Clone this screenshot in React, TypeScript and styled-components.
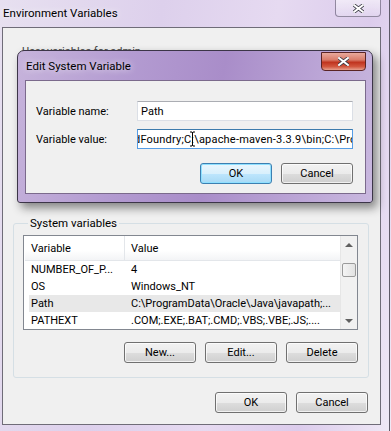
import React from "react";
import styled, { createGlobalStyle, css } from "styled-components";

const FONT = `"Roboto", "Liberation Sans", sans-serif`;

const Global = createGlobalStyle`
  html, body {
    margin: 0;
    padding: 0;
    background: #ffffff;
  }
  body {
    font-family: ${FONT};
    font-size: 11px;
    color: #000000;
  }
`;

const Screen = styled.div`
  position: relative;
  width: 391px;
  height: 431px;
  overflow: hidden;
  background: linear-gradient(
    100deg,
    #e7e0f0 0%,
    #ddd0ec 35%,
    #e6daf1 60%,
    #dcccec 80%,
    #efe9f6 100%
  );
`;

const OuterWindow = styled.div`
  display: flex;
  flex-direction: column;
  width: 389px;
  height: 431px;
  border-right: 1px solid #5e5a68;
`;

const TitleBar = styled.div`
  position: relative;
  height: 27px;
  display: flex;
  align-items: center;
  padding: 0 0 2px 3px;
  box-sizing: border-box;
  font-size: 11.5px;
  color: #000;
  text-shadow: 0 0 6px rgba(255, 255, 255, 0.9);
`;

const CloseButton = styled.div<{ $red?: boolean }>`
  position: absolute;
  display: flex;
  align-items: center;
  justify-content: center;
  box-sizing: border-box;
  border-radius: 0 0 4px 4px;
  ${(p) =>
    p.$red
      ? css`
          top: 1px;
          right: 0;
          width: 45px;
          height: 19px;
          border: 1px solid #5a2424;
          background: linear-gradient(
            #e8a99c 0%,
            #d97c6a 40%,
            #c0341f 55%,
            #d2573f 80%,
            #e6a08f 100%
          );
        `
      : css`
          top: 0;
          right: 8px;
          width: 46px;
          height: 17px;
          border: 1px solid rgba(70, 60, 90, 0.55);
          border-top: none;
          background: linear-gradient(
            rgba(255, 255, 255, 0.55),
            rgba(235, 228, 245, 0.35)
          );
        `}
`;

const Client = styled.div`
  position: relative;
  margin-left: 2px;
  width: 379px;
  height: 398px;
  border: 1px solid #6f6c78;
  background: #f0f0f0;
  display: flex;
  flex-direction: column;
  padding: 0 11px 0 10px;
  box-sizing: border-box;
`;

const UserLabel = styled.div`
  height: 188px;
  padding: 17px 0 0 9px;
  box-sizing: border-box;
  color: #444;
`;

const GroupBox = styled.fieldset`
  margin: 0;
  height: 162px;
  padding: 5px 10px 0 9px;
  border: 1px solid #d5dfe5;
  border-radius: 3px;
  box-sizing: border-box;
  display: flex;
  flex-direction: column;
  gap: 12px;
  legend {
    padding: 0 2px;
    margin-left: 5px;
    font-size: 11.5px;
  }
`;

const ListView = styled.div`
  display: flex;
  height: 95px;
  box-sizing: border-box;
  border: 1px solid #828790;
  background: #ffffff;
`;

const ListBody = styled.div`
  flex: 1;
  display: flex;
  flex-direction: column;
`;

const HeaderRow = styled.div`
  display: grid;
  grid-template-columns: 99px 1fr;
  height: 24px;
  background: linear-gradient(#ffffff 0%, #ffffff 60%, #f3f4f6 100%);
  border-bottom: 1px solid #e3e6ea;
  margin-left: 1px;
`;

const HeaderCell = styled.div`
  display: flex;
  align-items: center;
  padding-left: 6px;
  & + & {
    border-left: 1px solid #e3e6ea;
  }
`;

const Row = styled.div<{ $hl?: boolean }>`
  display: grid;
  grid-template-columns: 100px 1fr;
  height: 17px;
  align-items: center;
  margin-left: 5px;
  background: ${(p) => (p.$hl ? "#e8e8e8" : "transparent")};
  &:first-of-type {
    margin-top: 2px;
  }
`;

const Cell = styled.div`
  padding-left: 2px;
  white-space: nowrap;
  overflow: hidden;
`;

const ScrollBar = styled.div`
  width: 16px;
  display: flex;
  flex-direction: column;
  align-items: center;
  background: #f1f1f1;
  border-left: 1px solid #e6e6e6;
`;

const Arrow = styled.div<{ $down?: boolean }>`
  height: 17px;
  display: flex;
  align-items: center;
  justify-content: center;
  &::after {
    content: "";
    border-left: 4px solid transparent;
    border-right: 4px solid transparent;
    ${(p) =>
      p.$down
        ? "border-top: 4px solid #606060;"
        : "border-bottom: 4px solid #606060;"}
  }
`;

const Thumb = styled.div`
  margin-top: 10px;
  width: 14px;
  height: 14px;
  border: 1px solid #9a9a9a;
  border-radius: 2px;
  box-sizing: border-box;
  background: linear-gradient(90deg, #f4f4f4, #e2e2e2);
`;

const ScrollSpacer = styled.div`
  flex: 1;
`;

const ButtonRow = styled.div<{ $top?: number; $right?: number }>`
  display: flex;
  justify-content: flex-end;
  gap: 9px;
  margin-top: ${(p) => p.$top ?? 0}px;
  margin-right: ${(p) => p.$right ?? 0}px;
`;

const Button = styled.div<{ $default?: boolean }>`
  width: 72px;
  height: 21px;
  box-sizing: border-box;
  display: flex;
  align-items: center;
  justify-content: center;
  border-radius: 3px;
  border: 1px solid #707070;
  background: linear-gradient(#f2f2f2 0%, #ebebeb 50%, #dddddd 51%, #cfcfcf 100%);
  box-shadow: inset 0 0 0 1px rgba(255, 255, 255, 0.7);
  ${(p) =>
    p.$default &&
    css`
      border-color: #3c7fb1;
      background: linear-gradient(
        #eaf6fd 0%,
        #d9f0fc 50%,
        #bee6fd 51%,
        #a7d9f5 100%
      );
      box-shadow: inset 0 0 0 1px #8fe0ff;
    `}
`;

const EditDialog = styled.div`
  position: absolute;
  left: 14px;
  top: 22px;
  width: 356px;
  height: 153px;
  box-sizing: border-box;
  border: 1px solid #3c3548;
  border-radius: 7px 7px 3px 3px;
  background: linear-gradient(
    100deg,
    #c6b3db 0%,
    #b39bd1 30%,
    #a98dc9 55%,
    #bba5d6 80%,
    #c9b8df 100%
  );
  box-shadow: 4px 5px 10px rgba(0, 0, 0, 0.45);
  display: flex;
  flex-direction: column;
  padding: 0 6px 8px 7px;
`;

const DialogTitle = styled.div`
  position: relative;
  height: 29px;
  display: flex;
  align-items: center;
  padding-left: 1px;
  font-size: 11.5px;
  text-shadow: 0 0 7px rgba(255, 255, 255, 0.95);
`;

const DialogClient = styled.div`
  flex: 1;
  background: #f0f0f0;
  border: 1px solid #7b6a8c;
  padding: 20px 12px 0 10px;
  display: flex;
  flex-direction: column;
  gap: 8px;
`;

const Field = styled.div`
  display: flex;
  align-items: center;
`;

const FieldLabel = styled.div`
  width: 102px;
`;

const TextBox = styled.div<{ $focus?: boolean }>`
  position: relative;
  width: 218px;
  height: 20px;
  box-sizing: border-box;
  background: #ffffff;
  border: 1px solid ${(p) => (p.$focus ? "#569de5" : "#dbdfe6")};
  border-top-color: ${(p) => (p.$focus ? "#3d7bad" : "#abadb3")};
  display: flex;
  align-items: center;
  padding-left: 3px;
  overflow: hidden;
  white-space: nowrap;
`;

const Scrolled = styled.span`
  margin-left: -7px;
  letter-spacing: 0.2px;
`;

const IBeam = styled.svg`
  position: absolute;
  left: 51px;
  top: 1px;
`;

const XGlyph = () => (
  <svg width={11} height={9} viewBox="0 0 11 9">
    <path
      d="M1 1 L10 8 M10 1 L1 8"
      stroke="#3a3a44"
      strokeWidth="3.6"
      strokeLinecap="square"
    />
    <path
      d="M1 1 L10 8 M10 1 L1 8"
      stroke="#ffffff"
      strokeWidth="2"
      strokeLinecap="square"
    />
  </svg>
);

const rows = [
  { name: "NUMBER_OF_P...", value: "4" },
  { name: "OS", value: "Windows_NT" },
  { name: "Path", value: "C:\\ProgramData\\Oracle\\Java\\javapath;...", hl: true },
  { name: "PATHEXT", value: ".COM;.EXE;.BAT;.CMD;.VBS;.VBE;.JS;...." },
];

export default function App() {
  return (
    <>
      <Global />
      <Screen>
        <OuterWindow>
          <TitleBar>
            Environment Variables
            <CloseButton>
              <XGlyph />
            </CloseButton>
          </TitleBar>
          <Client>
            <UserLabel>User variables for admin</UserLabel>
            <GroupBox>
              <legend>System variables</legend>
              <ListView>
                <ListBody>
                  <HeaderRow>
                    <HeaderCell>Variable</HeaderCell>
                    <HeaderCell>Value</HeaderCell>
                  </HeaderRow>
                  {rows.map((r) => (
                    <Row key={r.name} $hl={r.hl}>
                      <Cell>{r.name}</Cell>
                      <Cell>{r.value}</Cell>
                    </Row>
                  ))}
                </ListBody>
                <ScrollBar>
                  <Arrow />
                  <Thumb />
                  <ScrollSpacer />
                  <Arrow $down />
                </ScrollBar>
              </ListView>
              <ButtonRow>
                <Button>New...</Button>
                <Button>Edit...</Button>
                <Button>Delete</Button>
              </ButtonRow>
            </GroupBox>
            <ButtonRow $top={14} $right={1}>
              <Button>OK</Button>
              <Button>Cancel</Button>
            </ButtonRow>

            <EditDialog>
              <DialogTitle>
                Edit System Variable
                <CloseButton $red>
                  <XGlyph />
                </CloseButton>
              </DialogTitle>
              <DialogClient>
                <Field>
                  <FieldLabel>Variable name:</FieldLabel>
                  <TextBox>Path</TextBox>
                </Field>
                <Field>
                  <FieldLabel>Variable value:</FieldLabel>
                  <TextBox $focus>
                    <Scrolled>
                      dFoundry;C:\apache-maven-3.3.9\bin;C:\Program Files
                    </Scrolled>
                    <IBeam width="7" height="16" viewBox="0 0 7 16">
                      <path
                        d="M1 1 H3 L3.5 2 L4 1 H6 M3.5 2 V14 M1 15 H3 L3.5 14 L4 15 H6"
                        stroke="#000"
                        strokeWidth="1"
                        fill="none"
                      />
                    </IBeam>
                  </TextBox>
                </Field>
                <ButtonRow $top={6}>
                  <Button $default>OK</Button>
                  <Button>Cancel</Button>
                </ButtonRow>
              </DialogClient>
            </EditDialog>
          </Client>
        </OuterWindow>
      </Screen>
    </>
  );
}
